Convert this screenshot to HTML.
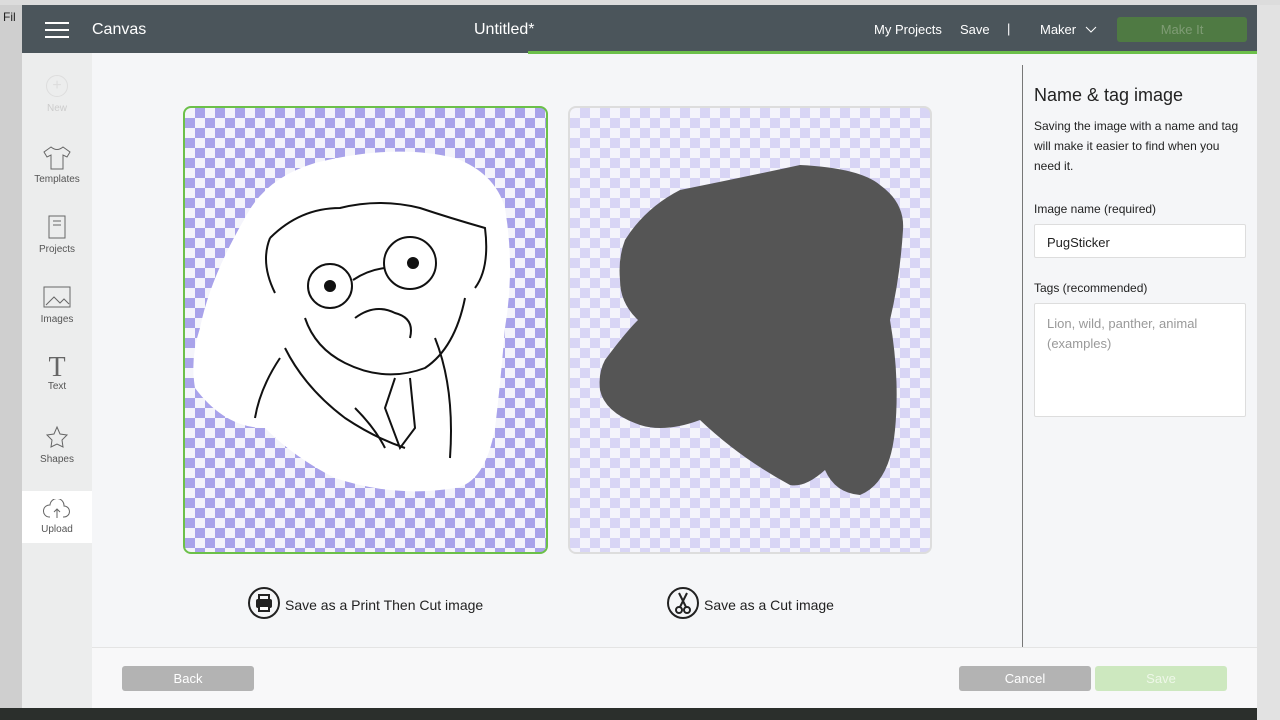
<!DOCTYPE html>
<html><head><style>
*{margin:0;padding:0;box-sizing:border-box}
body{width:1280px;height:720px;overflow:hidden;background:#d6d6d6;font-family:"Liberation Sans",sans-serif;position:relative}
.abs{position:absolute}
.win{left:22px;top:5px;width:1235px;height:703px;background:#f5f6f8;overflow:hidden}
.hdr{left:0;top:0;width:1235px;height:48px;background:#4b555b;color:#fff}
.side{left:0;top:48px;width:70px;height:655px;background:#eceded}
.item{position:absolute;left:0;width:70px;text-align:center;font-size:10px;color:#555}
.chk{background-color:#f4f4fb;background-image:linear-gradient(45deg,var(--c) 25%,transparent 25%,transparent 75%,var(--c) 75%),linear-gradient(45deg,var(--c) 25%,transparent 25%,transparent 75%,var(--c) 75%);background-size:20px 20px;background-position:0 0,10px 10px}
.btn{position:absolute;height:25px;border-radius:3px;color:#fff;font-size:13px;text-align:center;line-height:25px}
</style></head><body>
<div class="abs" style="left:0;top:0;width:22px;height:720px;background:#cfcfcf"></div>
<div class="abs" style="left:3px;top:10px;font-size:12px;color:#222">Fil</div>
<div class="abs" style="left:0;top:708px;width:1280px;height:12px;background:#2b2f2c"></div>
<div class="abs" style="left:1257px;top:0;width:23px;height:720px;background:#e2e2e2"></div>
<div class="abs" style="left:0;top:0;width:1280px;height:5px;background:#dcdcdc"></div>
<div class="abs win">
 <div class="abs hdr">
  <div class="abs" style="left:23px;top:17px;width:24px;height:2px;background:#fff;box-shadow:0 7px 0 #fff,0 14px 0 #fff"></div>
  <div class="abs" style="left:70px;top:16px;font-size:16px">Canvas</div>
  <div class="abs" style="left:452px;top:16px;font-size:16px">Untitled*</div>
  <div class="abs" style="left:852px;top:17px;font-size:13px">My Projects</div>
  <div class="abs" style="left:938px;top:17px;font-size:13px">Save</div>
  <div class="abs" style="left:985px;top:16px;font-size:13px">|</div>
  <div class="abs" style="left:1018px;top:17px;font-size:13px">Maker</div>
  <svg class="abs" style="left:1063px;top:21px" width="12" height="8"><path d="M1 1l5 5 5-5" stroke="#fff" fill="none"/></svg>
  <div class="btn" style="left:1095px;top:12px;width:130px;background:#4f7a43;color:#7f9c75">Make It</div>
  <div class="abs" style="left:506px;top:46px;width:729px;height:3px;background:#6cc04a"></div>
 </div>
 <div class="abs side">
  <div class="item" style="top:22px"><div style="width:22px;height:22px;margin:0 auto;border:1px solid #ddd;border-radius:50%;color:#ddd;font-size:16px;line-height:20px">+</div><div style="color:#ccc;margin-top:6px">New</div></div>
  <div class="item" style="top:92px"><svg width="30" height="26"><path d="M9 2l-7 5 3 5 4-2v14h12V10l4 2 3-5-7-5q-6 5-12 0z" fill="none" stroke="#666"/></svg><div>Templates</div></div>
  <div class="item" style="top:162px"><svg width="30" height="26"><rect x="7" y="1" width="16" height="22" fill="none" stroke="#666"/><path d="M11 6h8M11 10h8" stroke="#666"/></svg><div>Projects</div></div>
  <div class="item" style="top:232px"><svg width="30" height="26"><rect x="2" y="2" width="26" height="20" fill="none" stroke="#666"/><path d="M4 20l8-8 6 6 4-4 5 5" fill="none" stroke="#666"/></svg><div>Images</div></div>
  <div class="item" style="top:302px"><div style="font-size:28px;color:#666;line-height:26px;font-family:'Liberation Serif',serif">T</div><div>Text</div></div>
  <div class="item" style="top:372px"><svg width="30" height="26"><path d="M15 2l3 7 7 1-5 5 1 7-6-3-6 3 1-7-5-5 7-1z" fill="none" stroke="#666"/></svg><div>Shapes</div></div>
  <div class="item" style="top:438px;background:#fff;height:52px;padding-top:8px"><svg width="30" height="22"><path d="M8 18h-1a6 6 0 0 1 1-12 7 7 0 0 1 14 1 5 5 0 0 1 0 11h-1M15 10v9M12 13l3-3 3 3" fill="none" stroke="#666"/></svg><div>Upload</div></div>
 </div>
 <div class="abs chk" style="--c:#a9a3ea;left:161px;top:101px;width:365px;height:448px;border:2px solid #6cc04a;border-radius:8px">
  <svg width="361" height="444" style="position:absolute;left:0;top:0">
   <path d="M60 110q20-40 70-55 80-20 140-5 40 15 50 50 10 60 0 120-5 60-10 100-10 55-40 60-60 10-120-10-40-20-70-50-40 0-70-40-5-30 5-60 10-50 45-110z" fill="#fff"/>
   <g fill="none" stroke="#111" stroke-width="2">
    <path d="M85 130q30-30 70-30 40-10 80 0 30 10 65 20 5 40-10 60M85 130q-10 25 5 55"/>
    <circle cx="145" cy="178" r="22"/><circle cx="225" cy="155" r="26"/>
    <circle cx="145" cy="178" r="5" fill="#111"/><circle cx="228" cy="155" r="5" fill="#111"/>
    <path d="M168 172q15-10 32-12M170 210q20-15 40-5 20 5 15 25M120 210q10 30 40 45 40 20 80 5 30-20 40-70M100 240q20 40 60 70 30 20 60 30M210 270l-10 30 15 40 15-20-5-50"/>
    <path d="M95 250q-20 30-25 60M250 230q20 50 15 120M170 300q20 20 30 40"/>
   </g>
  </svg>
 </div>
 <div class="abs chk" style="--c:#d8d5f5;left:546px;top:101px;width:364px;height:448px;border:2px solid #ddd;border-radius:8px">
  <svg width="360" height="444" style="position:absolute;left:0;top:0">
   <path d="M110 82Q170 70 230 57Q290 60 310 77Q335 95 333 122Q330 170 320 212Q330 270 325 322Q320 375 290 387Q265 385 255 362Q235 380 220 377Q170 350 130 312Q95 325 70 317Q35 305 30 282Q28 265 35 252Q55 225 68 212Q50 195 50 172Q48 150 55 132Q75 100 110 82Z" fill="#555"/>
  </svg>
 </div>
 <svg class="abs" style="left:226px;top:582px" width="32" height="32"><circle cx="16" cy="16" r="15" fill="none" stroke="#222" stroke-width="2"/><rect x="8" y="12" width="16" height="9" rx="2" fill="#222"/><rect x="11" y="8" width="10" height="5" fill="none" stroke="#222" stroke-width="2"/><rect x="11" y="19" width="10" height="5" fill="#fff" stroke="#222" stroke-width="2"/></svg>
 <div class="abs" style="left:263px;top:592px;font-size:14px;color:#222">Save as a Print Then Cut image</div>
 <svg class="abs" style="left:645px;top:582px" width="32" height="32"><circle cx="16" cy="16" r="15" fill="none" stroke="#222" stroke-width="2"/><path d="M12 6l7 14M20 6l-7 14" stroke="#222" stroke-width="2"/><circle cx="12" cy="23" r="3" fill="none" stroke="#222" stroke-width="2"/><circle cx="20" cy="23" r="3" fill="none" stroke="#222" stroke-width="2"/></svg>
 <div class="abs" style="left:682px;top:592px;font-size:14px;color:#222">Save as a Cut image</div>
 <div class="abs" style="left:1000px;top:60px;width:1px;height:583px;background:#777"></div>
 <div class="abs" style="left:1012px;top:80px;font-size:18px;color:#222">Name &amp; tag image</div>
 <div class="abs" style="left:1012px;top:111px;width:210px;font-size:12px;line-height:20px;color:#222">Saving the image with a name and tag will make it easier to find when you need it.</div>
 <div class="abs" style="left:1012px;top:197px;font-size:12px;color:#222">Image name (required)</div>
 <div class="abs" style="left:1012px;top:219px;width:212px;height:34px;background:#fff;border:1px solid #ddd;border-radius:2px;padding:10px 12px;font-size:13px;color:#222">PugSticker</div>
 <div class="abs" style="left:1012px;top:276px;font-size:12px;color:#222">Tags (recommended)</div>
 <div class="abs" style="left:1012px;top:298px;width:212px;height:114px;background:#fff;border:1px solid #ddd;border-radius:2px;padding:10px 12px;font-size:13px;line-height:20px;color:#999">Lion, wild, panther, animal (examples)</div>
 <div class="abs" style="left:70px;top:642px;width:1165px;height:1px;background:#e4e4e4"></div>
 <div class="abs" style="left:70px;top:643px;width:1165px;height:60px;background:#f8f8f9"></div>
 <div class="btn" style="left:100px;top:661px;width:132px;background:#b3b3b3">Back</div>
 <div class="btn" style="left:937px;top:661px;width:132px;background:#b3b3b3">Cancel</div>
 <div class="btn" style="left:1073px;top:661px;width:132px;background:#cde8bf;color:#eef7e8">Save</div>
</div>
</body></html>
